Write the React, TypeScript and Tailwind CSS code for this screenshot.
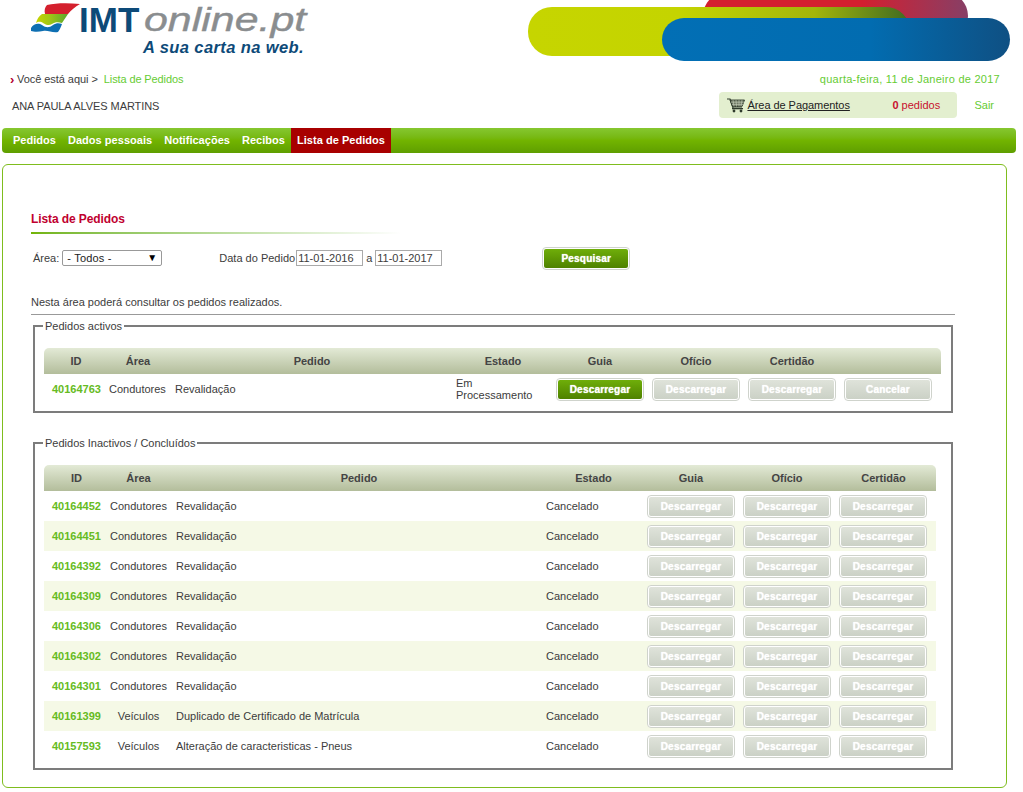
const F = "font-['Liberation_Sans',Arial,sans-serif]";

function Logo() {
  return (
    <div className="relative h-[69px] w-[340px]">
      <svg width="80" height="40" viewBox="0 0 80 40" className="absolute left-0 top-0">
        <defs>
          <linearGradient id="lg" x1="0" x2="1" y1="0" y2="0">
            <stop offset="0" stopColor="#c9d400" />
            <stop offset="0.4" stopColor="#a4c815" />
            <stop offset="1" stopColor="#58a82e" />
          </linearGradient>
        </defs>
        <path d="M47 5 C56 3 68 3 80 4 C75 7 71 10 68 14 L45 14 C44 10 45 7 47 5Z" fill="#d4202e" />
        <path d="M42 14 H68 C66 17 64 20 62 23 C58 22 55 22 52 24 C49 26 46 25 43 23 C40 21 38 22 36 23 C37 19 39 16 42 14 Z" fill="url(#lg)" />
        <path d="M31 28 C34 23 39 23 42 25 C46 28 49 28 53 25 C56 23 59 23 62 24 C61 27 60 29 58 32 C52 33 48 30 43 31 C39 32 34 32 31 31Z" fill="#0e6fb2" />
      </svg>
      <span className={`absolute left-[79px] top-[5px] text-[35px] font-bold leading-[30px] text-[#0d4a78] ${F}`}>IMT</span>
      <span className={`absolute left-[144px] top-[5px] origin-left scale-x-[1.3] text-[33px] italic leading-[30px] text-[#8a8d8f] [-webkit-text-stroke:0.4px_#8a8d8f] ${F}`}>online.pt</span>
      <span className={`absolute left-[143px] top-[38px] text-[16.5px] font-bold italic leading-[19px] tracking-[0.4px] text-[#0d4a78] ${F}`}>A sua carta na web.</span>
    </div>
  );
}

function Banner() {
  return (
    <svg width="495" height="69" viewBox="0 0 495 69" className="shrink-0">
      <defs>
        <linearGradient id="red" x1="0" x2="1" y1="0" y2="0">
          <stop offset="0" stopColor="#d41f2f" />
          <stop offset="0.6" stopColor="#d41f2f" />
          <stop offset="1" stopColor="#873f66" />
        </linearGradient>
        <linearGradient id="lime" x1="0" x2="1" y1="0" y2="0">
          <stop offset="0" stopColor="#c6d500" />
          <stop offset="0.4" stopColor="#c4d400" />
          <stop offset="0.75" stopColor="#a3b50a" />
          <stop offset="1" stopColor="#3f6a22" />
        </linearGradient>
        <linearGradient id="blue" x1="0" x2="1" y1="0" y2="0">
          <stop offset="0" stopColor="#026fb5" />
          <stop offset="0.6" stopColor="#026cb0" />
          <stop offset="1" stopColor="#0f5083" />
        </linearGradient>
      </defs>
      <rect x="175" y="-8" width="265" height="48" rx="24" fill="url(#red)" />
      <rect x="0" y="7" width="382" height="49" rx="24" fill="url(#lime)" />
      <rect x="134" y="18" width="348" height="43" rx="22" fill="url(#blue)" />
    </svg>
  );
}

function Cart() {
  return (
    <svg width="20" height="16" viewBox="0 0 20 16" className="shrink-0">
      <path d="M1 2 L4 2 L7 11 H16" fill="none" stroke="#2f3a2c" strokeWidth="1.2" />
      <path d="M4 3 H18.5 L16 9.5 H6.5Z" fill="#6b7560" stroke="#2f3a2c" strokeWidth="0.9" />
      <path d="M7 3 L8 9.5 M10 3 L10.5 9.5 M13 3 L13 9.5 M16 3 L15 9.5 M5 5.2 H18 M6 7.4 H17" stroke="#c9d2c0" strokeWidth="0.6" />
      <rect x="6" y="11" width="11" height="1.3" fill="#2f3a2c" />
      <circle cx="8" cy="14" r="1.4" fill="#2f3a2c" />
      <circle cx="15" cy="14" r="1.4" fill="#2f3a2c" />
    </svg>
  );
}

function Btn({ label, on, w = "" }: { label: string; on?: boolean; w?: string }) {
  return (
    <span className={`flex h-[23px] w-[88px] rounded-[4px] border border-[#cfd3cc] bg-white p-px ${w}`}>
      <span
        className={`flex flex-1 items-center justify-center rounded-[2px] text-[10px] font-bold tracking-[0.2px] text-white [text-shadow:0_0_1px_#ffffff] ${
          on
            ? "bg-gradient-to-b from-[#6fae0a] to-[#4f8200]"
            : "bg-gradient-to-b from-[#dfe3da] to-[#cbd1c6]"
        }`}
      >
        {label}
      </span>
    </span>
  );
}

const headBg = "bg-gradient-to-b from-[#e3ead6] to-[#b3bd9b] rounded-t-[5px]";

type Row = [string, string, string];
const rows: Row[] = [
  ["40164452", "Condutores", "Revalidação"],
  ["40164451", "Condutores", "Revalidação"],
  ["40164392", "Condutores", "Revalidação"],
  ["40164309", "Condutores", "Revalidação"],
  ["40164306", "Condutores", "Revalidação"],
  ["40164302", "Condutores", "Revalidação"],
  ["40164301", "Condutores", "Revalidação"],
  ["40161399", "Veículos", "Duplicado de Certificado de Matrícula"],
  ["40157593", "Veículos", "Alteração de caracteristicas - Pneus"],
];

const activeCols = "grid-cols-[64px_66px_282px_100px_96px_96px_96px_97px]";
const doneCols = "grid-cols-[65px_59px_378px_101px_96px_96px_97px]";

export default function App() {
  return (
    <div className={`h-[792px] w-[1023px] overflow-hidden bg-white text-[11px] text-[#3c3c3c] ${F}`}>
      <header className="flex h-[69px] justify-between">
        <Logo />
        <Banner />
      </header>

      <div className="flex h-[21px] items-center justify-between pl-[10px] pr-[23px]">
        <div className="flex items-center">
          <span className="mr-[2px] w-[5px] text-[13px] font-bold leading-[11px] text-[#b40032]">›</span>
          <span className="tracking-[-0.05px]">Você está aqui &gt;</span>
          <span className="ml-[6px] tracking-[-0.12px] text-[#66cc33]">Lista de Pedidos</span>
        </div>
        <span className="tracking-[0.26px] text-[#66cc33]">quarta-feira, 11 de Janeiro de 2017</span>
      </div>

      <div className="flex h-[38px] items-start justify-between pl-[12px] pt-[2px]">
        <span className="mt-[6px] tracking-[-0.08px]">ANA PAULA ALVES MARTINS</span>
        <div className="flex items-center">
          <div className="flex h-[26px] w-[238px] items-center rounded-[4px] bg-[#e3efcf] pl-[7px]">
            <Cart />
            <span className="ml-px w-[145px] tracking-[-0.05px] text-[#222] underline">Área de Pagamentos</span>
            <span className="text-[#c8102e]"><b>0</b> pedidos</span>
          </div>
          <span className="ml-[17px] mr-[29px] text-[#66cc33]">Sair</span>
        </div>
      </div>

      <nav className="ml-[2px] flex h-[25px] w-[1014px] items-stretch rounded-[4px] bg-gradient-to-b from-[#86c72f] via-[#72b400] to-[#5f9e00] pl-[5px] text-[11px] font-bold tracking-[0.03px] text-white">
        {["Pedidos", "Dados pessoais", "Notificações", "Recibos"].map((n) => (
          <span key={n} className="flex items-center px-[6px]">{n}</span>
        ))}
        <span className="flex items-center bg-[#a80000] px-[6px]">Lista de Pedidos</span>
      </nav>

      <main className="ml-[2px] mt-[11px] h-[624px] w-[1005px] rounded-[6px] border border-[#7fbd1e] pl-[28px] pt-[46px]">
        <h1 className="text-[12px] font-bold leading-[16px] tracking-[-0.1px] text-[#c0002f]">Lista de Pedidos</h1>
        <div className="mt-[5px] h-[2px] w-[370px] bg-gradient-to-r from-[#72b400] to-white" />

        <div className="mt-[16px] flex h-[16px] items-center">
          <span className="ml-[2px]">Área:</span>
          <span className="ml-[3px] flex h-[16px] w-[100px] items-center justify-between rounded-[2px] border border-[#999] pl-[4px] pr-[4px] tracking-[0.2px] text-[#222]">
            <span>- Todos -</span>
            <span className="text-[10px] leading-[10px] text-black">▼</span>
          </span>
          <span className="ml-[57px]">Data do Pedido</span>
          <span className="ml-px flex h-[16px] w-[67px] items-center border border-[#aaa] pl-px">11-01-2016</span>
          <span className="mx-[3px]">a</span>
          <span className="flex h-[16px] w-[67px] items-center border border-[#aaa] pl-px">11-01-2017</span>
          <Btn label="Pesquisar" on w="ml-[100px] shrink-0" />
        </div>

        <p className="mt-[29px] leading-[14px]">Nesta área poderá consultar os pedidos realizados.</p>
        <div className="mt-[5px] h-px w-[924px] bg-[#999]" />

        <fieldset className="ml-[2px] mt-[5px] h-[93px] w-[920px] border-2 border-[#7c7c7c] px-[9px]">
          <legend className="-ml-px px-[2px] leading-[12px]">Pedidos activos</legend>
          <div className={`mt-[16px] grid h-[26px] w-[897px] items-center text-center font-bold text-[#444] ${headBg} ${activeCols}`}>
            <span>ID</span>
            <span className="pr-[6px]">Área</span>
            <span className="pr-[6px]">Pedido</span>
            <span className="pr-[6px]">Estado</span>
            <span className="pr-[8px]">Guia</span>
            <span className="pr-[8px]">Ofício</span>
            <span className="pr-[8px]">Certidão</span>
            <span />
          </div>
          <div className={`grid h-[30px] w-[897px] items-center ${activeCols}`}>
            <span className="pl-[8px] font-bold text-[#66bb22]">40164763</span>
            <span className="pl-px">Condutores</span>
            <span className="pl-px">Revalidação</span>
            <span className="leading-[12px]">Em<br />Processamento</span>
            <Btn label="Descarregar" on />
            <Btn label="Descarregar" />
            <Btn label="Descarregar" />
            <Btn label="Cancelar" />
          </div>
        </fieldset>

        <fieldset className="ml-[2px] mt-[24px] h-[333px] w-[920px] border-2 border-[#7c7c7c] px-[9px]">
          <legend className="-ml-px px-[2px] leading-[12px]">Pedidos Inactivos / Concluídos</legend>
          <div className={`mt-[16px] grid h-[26px] w-[892px] items-center text-center font-bold text-[#444] ${headBg} ${doneCols}`}>
            <span>ID</span>
            <span>Área</span>
            <span className="pl-[4px]">Pedido</span>
            <span className="pr-[6px]">Estado</span>
            <span className="pr-[8px]">Guia</span>
            <span className="pr-[8px]">Ofício</span>
            <span className="pr-[8px]">Certidão</span>
          </div>
          {rows.map((r, i) => (
            <div key={r[0]} className={`grid h-[30px] w-[892px] items-center ${doneCols} ${i % 2 ? "bg-[#f5f9e6]" : ""}`}>
              <span className="pl-[8px] font-bold text-[#66bb22]">{r[0]}</span>
              <span className="text-center">{r[1]}</span>
              <span className="pl-[8px]">{r[2]}</span>
              <span>Cancelado</span>
              <Btn label="Descarregar" />
              <Btn label="Descarregar" />
              <Btn label="Descarregar" />
            </div>
          ))}
        </fieldset>
      </main>
    </div>
  );
}
